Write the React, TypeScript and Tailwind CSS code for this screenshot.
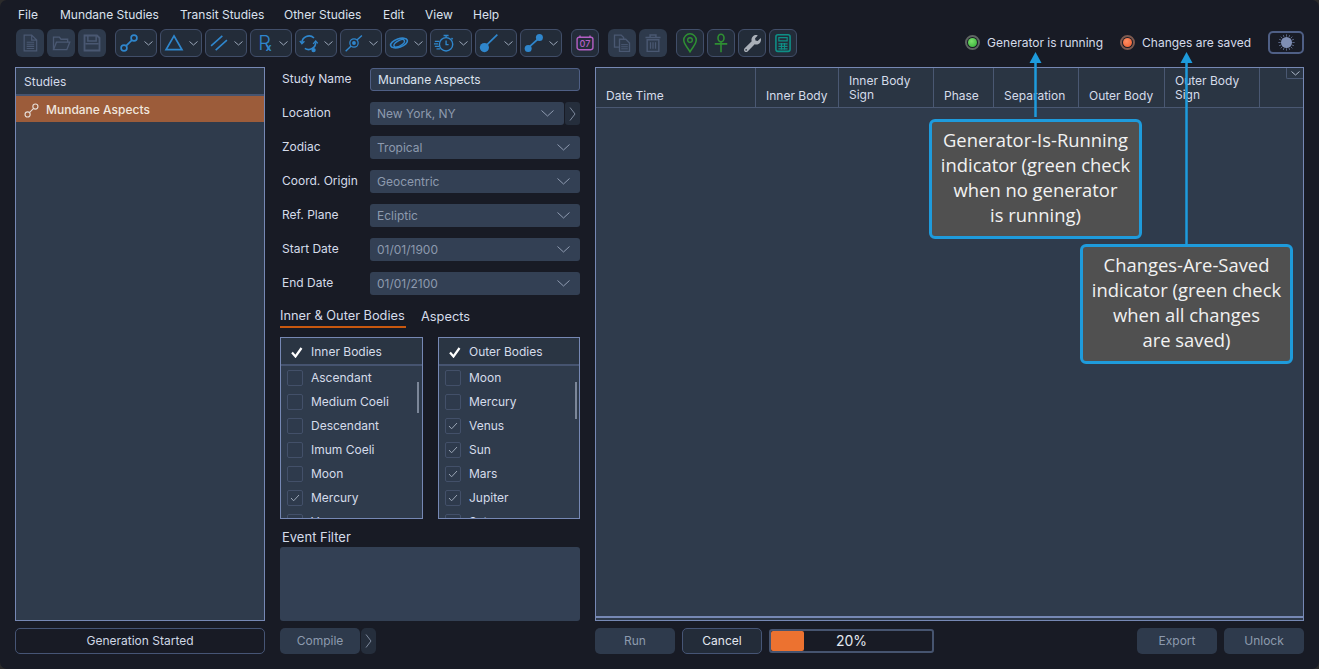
import React from "react";
import { FaWrench } from "react-icons/fa";

const Chevron = ({ w = 9, h = 4, c = "#9aa6b8" }: { w?: number; h?: number; c?: string }) => (
  <svg width={w} height={h + 1} viewBox={`0 0 ${w} ${h + 1}`} fill="none" className="shrink-0">
    <path d={`M0.5 0.5 L${w / 2} ${h} L${w - 0.5} 0.5`} stroke={c} strokeWidth="1" />
  </svg>
);

const RightChev = () => (
  <svg width="7" height="16" viewBox="0 0 7 16" fill="none">
    <path d="M1 1.5 L6 8 L1 14.5" stroke="#7d899c" strokeWidth="1" />
  </svg>
);

const S = ({ children, size = 20 }: { children: React.ReactNode; size?: number }) => (
  <svg width={size} height={size} viewBox="0 0 24 24" fill="none" className="shrink-0 overflow-visible">
    {children}
  </svg>
);

const BLUE = "#2f86cc";
const DIM = "#4a5872";

const IconDoc = () => (
  <S>
    <path d="M5 2.5 H14 L20 8.5 V21.5 H5 Z M14 2.5 V8.5 H20" stroke={DIM} strokeWidth="1.5" />
    <path d="M8 11 H17 M8 13.5 H17 M8 16 H17 M8 18.5 H17" stroke={DIM} strokeWidth="1.3" />
  </S>
);
const IconFolder = () => (
  <S>
    <path d="M3 20 V5 H10 L12 7.5 H20 V11" stroke={DIM} strokeWidth="1.6" />
    <path d="M3 20 L6.5 11 H22.5 L19 20 Z" stroke={DIM} strokeWidth="1.6" />
  </S>
);
const IconSave = () => (
  <S>
    <path d="M3 3 H18 L21 6 V21 H3 Z" stroke={DIM} strokeWidth="2.2" />
    <path d="M7 3 V9.5 H17 V3 M4 13 H20" stroke={DIM} strokeWidth="1.8" />
  </S>
);
const IconConj = ({ c = BLUE, sw = 2 }: { c?: string; sw?: number }) => (
  <S>
    <circle cx="6" cy="18" r="3.5" stroke={c} strokeWidth={sw} />
    <circle cx="18" cy="6" r="3.5" stroke={c} strokeWidth={sw} />
    <path d="M8.5 15.5 L15.5 8.5" stroke={c} strokeWidth={sw} />
  </S>
);
const IconTri = () => (
  <S>
    <path d="M12 3.5 L21.5 20 H2.5 Z" stroke={BLUE} strokeWidth="2.1" />
  </S>
);
const IconPar = () => (
  <S>
    <path d="M2.5 15.5 L16 3.5 M8 20.5 L21.5 8.5" stroke={BLUE} strokeWidth="1.9" />
  </S>
);
const IconRx = () => (
  <S>
    <text x="5" y="20" fontSize="24" fontFamily="Inter, sans-serif" fontWeight="300" fill={BLUE}>
      R
      <tspan dx="-6" dy="2" fontSize="12" fontWeight="700">x</tspan>
    </text>
  </S>
);
const IconCycle = () => (
  <S>
    <path d="M3.5 12 A8.5 8.5 0 0 1 18 6" stroke={BLUE} strokeWidth="1.9" />
    <path d="M20 11 A8.5 8.5 0 0 1 7 18.5" stroke={BLUE} strokeWidth="1.9" />
    <path d="M1 9.5 L3.5 13 L6.5 10 M17 13 L20 9.5 L22.5 12.5" stroke={BLUE} strokeWidth="1.6" />
    <circle cx="17.5" cy="20.5" r="2.6" fill={BLUE} />
  </S>
);
const IconNode = () => (
  <S>
    <path d="M2 22 L8.5 15.5 M15.5 8.5 L21.5 3" stroke={BLUE} strokeWidth="1.7" />
    <circle cx="12" cy="12" r="5" stroke={BLUE} strokeWidth="1.5" />
    <circle cx="12" cy="12" r="2.3" fill={BLUE} />
  </S>
);
const IconOrbit = () => (
  <S>
    <ellipse cx="12" cy="12" rx="10.5" ry="5" transform="rotate(-18 12 12)" stroke={BLUE} strokeWidth="2" />
    <ellipse cx="12" cy="12.5" rx="7" ry="3.2" transform="rotate(-30 12 12)" stroke={BLUE} strokeWidth="1.7" />
  </S>
);
const IconTimer = () => (
  <S>
    <circle cx="14.5" cy="13.5" r="8" stroke={BLUE} strokeWidth="1.7" />
    <path d="M11.5 3 H17.5 M14.5 3 V5.5 M14.5 9 V14 H17.5 M21 6 L22.5 7.5" stroke={BLUE} strokeWidth="1.6" />
    <path d="M1 10 H6.5 M0 13 H5 M1 16 H6 M3 19 H7.5" stroke={BLUE} strokeWidth="1.6" />
  </S>
);
const IconBall = () => (
  <S>
    <circle cx="6.5" cy="17.5" r="5.5" fill={BLUE} />
    <path d="M9 14.5 L22 2" stroke={BLUE} strokeWidth="2" />
  </S>
);
const IconDumb = () => (
  <S>
    <circle cx="5" cy="18.5" r="4.2" fill={BLUE} />
    <circle cx="18.5" cy="5.5" r="4.2" fill={BLUE} />
    <path d="M6 17 L17 7" stroke={BLUE} strokeWidth="2.1" />
  </S>
);
const IconCal = () => (
  <S>
    <rect x="2.5" y="5" width="19" height="15" rx="2.5" stroke="#b45fc4" strokeWidth="1.7" />
    <path d="M6 3 V6 M18 3 V6" stroke="#b45fc4" strokeWidth="1.7" />
    <text x="12" y="17" textAnchor="middle" fontSize="11" fontFamily="Inter, sans-serif" fontWeight="500" fill="#b45fc4">07</text>
  </S>
);
const IconCopy = () => (
  <S>
    <path d="M3 2.5 H11 L14 5.5 V17 H3 Z" stroke={DIM} strokeWidth="1.6" />
    <path d="M9 7.5 H16.5 L21 12 V22 H9 Z" fill="#2e3a4c" stroke={DIM} strokeWidth="1.6" />
    <path d="M11 14 H19 M11 16.5 H19 M11 19 H19" stroke={DIM} strokeWidth="1.2" />
  </S>
);
const IconTrash = () => (
  <S>
    <path d="M3 5.5 H21 M8.5 5.5 V2.5 H15.5 V5.5" stroke={DIM} strokeWidth="1.8" />
    <path d="M5 8 H19 V22 H5 Z" stroke={DIM} strokeWidth="1.7" />
    <path d="M9 11 V19 M12 11 V19 M15 11 V19" stroke={DIM} strokeWidth="1.5" />
  </S>
);
const IconPin = () => (
  <S>
    <path d="M12 22.5 C8 16 4.5 13 4.5 8.5 A7.5 7.5 0 0 1 19.5 8.5 C19.5 13 16 16 12 22.5 Z" stroke="#2f8f33" strokeWidth="1.8" />
    <circle cx="12" cy="8.5" r="2.8" stroke="#2f8f33" strokeWidth="1.6" />
  </S>
);
const IconAnkh = () => (
  <S>
    <ellipse cx="12" cy="6" rx="3.6" ry="4.6" stroke="#2f8f33" strokeWidth="1.9" />
    <path d="M12 11 V23 M4.5 13 H19.5" stroke="#2f8f33" strokeWidth="1.9" />
  </S>
);
const IconCalc = () => (
  <S>
    <rect x="3.5" y="2" width="17" height="20" rx="2.5" stroke="#0e8f86" strokeWidth="1.9" />
    <path d="M7 5.5 H17 V9.5 H7 Z" stroke="#0e8f86" strokeWidth="1.4" />
    <path d="M6.5 13 H17.5 M6.5 16 H17.5 M6.5 19 H17.5 M10.2 12 V20 M13.8 12 V20" stroke="#0e8f86" strokeWidth="1.3" />
  </S>
);
const IconSun = () => (
  <svg width="17" height="17" viewBox="0 0 16 16" fill="none">
    <circle cx="8" cy="8" r="5.2" fill="#7f8eb4" />
    <g stroke="#6f7ea4" strokeWidth="0.7">
      <path d="M8 0.3 V2.5 M8 13.5 V15.7 M0.3 8 H2.5 M13.5 8 H15.7 M2.5 2.5 L4 4 M12 12 L13.5 13.5 M13.5 2.5 L12 4 M4 12 L2.5 13.5" />
      <path d="M5 1 L5.6 2.8 M11 1 L10.4 2.8 M5 15 L5.6 13.2 M11 15 L10.4 13.2 M1 5 L2.8 5.6 M1 11 L2.8 10.4 M15 5 L13.2 5.6 M15 11 L13.2 10.4" />
    </g>
  </svg>
);

const Flat = ({ children }: { children: React.ReactNode }) => (
  <div className="w-7 h-7 rounded-[6px] bg-[#2e3a4c] flex items-center justify-center">{children}</div>
);
const Outlined = ({ children }: { children: React.ReactNode }) => (
  <div className="w-7 h-7 rounded-[6px] bg-[#232c39] border border-[#414e69] flex items-center justify-center">{children}</div>
);
const Drop = ({ children }: { children: React.ReactNode }) => (
  <div className="w-[42px] h-7 rounded-[6px] bg-[#232c39] border border-[#414e69] flex items-center pl-[3px] pr-[3px] justify-between">
    {children}
    <Chevron />
  </div>
);

const Field = ({ label, value, extra }: { label: string; value: string; extra?: boolean }) => (
  <div className="flex items-center h-[23px] mb-[11px]">
    <span className="w-[90px] pl-[2px] shrink-0 text-[#d5dcea] -mt-[1px]">{label}</span>
    <div className="flex-1 flex gap-px h-full">
      <div className="flex-1 h-full bg-[#334054] rounded-[3px] flex items-center justify-between pl-[7px] pr-[10px] text-[#8d9aae]">
        <span>{value}</span>
        <Chevron w={13} h={6} c="#8f9bb0" />
      </div>
      {extra && (
        <div className="w-[15px] h-full rounded-[3px] bg-[#252e3c] flex items-center justify-center">
          <RightChev />
        </div>
      )}
    </div>
  </div>
);

const Check = ({ on }: { on?: boolean }) => (
  <div className="w-4 h-4 shrink-0 rounded-[2px] bg-[#2e3a4c] border border-[#435069] flex items-center justify-center">
    {on && (
      <svg width="10" height="8" viewBox="0 0 10 8" fill="none">
        <path d="M1 4 L3.6 6.8 L9 1" stroke="#9aa5b5" strokeWidth="1" />
      </svg>
    )}
  </div>
);

const BodyList = ({
  title,
  items,
  width,
  thumbHeight,
  thumbRight,
}: {
  title: string;
  items: [string, boolean][];
  width: string;
  thumbHeight: string;
  thumbRight: string;
}) => (
  <div className={`${width} h-[182px] border border-[#7688b4] bg-[#2f3b4c] relative overflow-hidden`}>
    <div className="h-[24px] pt-[2px] bg-[#2a3543] border-b-2 border-[#465470] flex items-center box-content">
      <svg width="12" height="11" viewBox="0 0 12 11" fill="none" className="ml-[10px] mr-[8px]">
        <path d="M1 5.5 L4.5 9.5 L10.5 1" stroke="#ffffff" strokeWidth="2.2" />
      </svg>
      <span className="text-[#d5dcea]">{title}</span>
    </div>
    <div>
      {items.map(([name, on]) => (
        <div key={name} className="h-6 flex items-center pl-[6px] gap-[8px] text-[#d5dcea]">
          <Check on={on} />
          <span>{name}</span>
        </div>
      ))}
    </div>
    <div className={`absolute top-[44px] ${thumbRight} w-[2px] ${thumbHeight} bg-[#7c8799]`} />
  </div>
);

const Btn = ({ children, width = "w-20" }: { children: React.ReactNode; width?: string }) => (
  <div className={`${width} h-[26px] rounded-[5px] bg-[#2e3a4c] text-[#8d9aae] flex items-center justify-center`}>{children}</div>
);

const Th = ({ w, children, last, two }: { w: string; children?: React.ReactNode; last?: boolean; two?: boolean }) => (
  <div className={`${w} h-full shrink-0 pl-[10px] ${two ? "pb-[5px]" : "pb-[4px]"} flex items-end leading-[14px] text-[#d5dcea] ${last ? "" : "border-r border-[#4a5872]"}`}>
    <span>{children}</span>
  </div>
);

const Dot = ({ core, edge }: { core: string; edge: string }) => (
  <div className={`w-[15px] h-[15px] rounded-full border-2 ${edge} flex items-center justify-center`}>
    <div className={`w-[9px] h-[9px] rounded-full ${core}`} />
  </div>
);

const Callout = ({ lines, pos }: { lines: string[]; pos: string }) => (
  <div className={`absolute ${pos} w-[213px] h-[120px] pb-[4px] rounded-[6px] border-[3px] border-[#1e9bdc] bg-[#505050] text-[#f2f2f2] text-[18.4px] leading-[25px] flex flex-col items-center justify-center font-['Open_Sans',sans-serif]`}>
    {lines.map((l) => (
      <div key={l} className="whitespace-nowrap">{l}</div>
    ))}
  </div>
);

export default function App() {
  return (
    <div className="w-[1319px] h-[669px] bg-[#2b2b2b]">
      <div className="w-full h-full relative overflow-hidden rounded-[7px] bg-[#181b25] font-['Inter',sans-serif] text-[12px] leading-[16px] px-[15px] flex flex-col">
        {/* Menu */}
        <div className="h-[29px] flex items-center text-[#dbe2ee] pl-[3px] shrink-0">
          <span className="w-[42px]">File</span>
          <span className="w-[120px]">Mundane Studies</span>
          <span className="w-[104px]">Transit Studies</span>
          <span className="w-[99px]">Other Studies</span>
          <span className="w-[42px]">Edit</span>
          <span className="w-[48px]">View</span>
          <span>Help</span>
        </div>

        {/* Toolbar */}
        <div className="h-7 flex items-center shrink-0 pl-px">
          <div className="flex gap-[3px]">
            <Flat><IconDoc /></Flat>
            <Flat><IconFolder /></Flat>
            <Flat><IconSave /></Flat>
          </div>
          <div className="flex gap-[3px] ml-[9px]">
            <Drop><IconConj /></Drop>
            <Drop><IconTri /></Drop>
            <Drop><IconPar /></Drop>
            <Drop><IconRx /></Drop>
            <Drop><IconCycle /></Drop>
            <Drop><IconNode /></Drop>
            <Drop><IconOrbit /></Drop>
            <Drop><IconTimer /></Drop>
            <Drop><IconBall /></Drop>
            <Drop><IconDumb /></Drop>
          </div>
          <div className="ml-[9px]"><Outlined><IconCal /></Outlined></div>
          <div className="flex gap-[3px] ml-[9px]">
            <Flat><IconCopy /></Flat>
            <Flat><IconTrash /></Flat>
          </div>
          <div className="flex gap-[3px] ml-[9px]">
            <Outlined><IconPin /></Outlined>
            <Outlined><IconAnkh /></Outlined>
            <Outlined><FaWrench size={17} color="#aab0b8" /></Outlined>
            <Outlined><IconCalc /></Outlined>
          </div>
          <div className="ml-auto flex items-center text-[#d5dcea] -mt-[1px]">
            <Dot core="bg-[radial-gradient(circle_at_40%_35%,#7be06b,#2fae35)]" edge="border-[#5f6663]" />
            <span className="ml-[7px]">Generator is running</span>
            <div className="ml-[17px]"><Dot core="bg-[radial-gradient(circle_at_40%_35%,#ff8e63,#ec5a2c)]" edge="border-[#7d5a50]" /></div>
            <span className="ml-[7px]">Changes are saved</span>
            <div className="ml-[17px] w-9 h-[23px] rounded-[5px] border-2 border-[#4f5f85] flex items-center justify-center">
              <IconSun />
            </div>
          </div>
        </div>

        {/* Main */}
        <div className="flex gap-[15px] mt-[10px] flex-1 min-h-0 pb-[15px]">
          {/* Studies */}
          <div className="w-[250px] flex flex-col shrink-0">
            <div className="h-[554px] border border-[#7688b4] bg-[#2f3b4c]">
              <div className="h-[26px] pt-[2px] bg-[#2a3543] flex items-center pl-[8px] text-[#d5dcea]">Studies</div>
              <div className="h-[2px] bg-[#465470]" />
              <div className="h-[26px] pt-[2px] bg-[#9c5c3a] flex items-center pl-[7px] gap-[6px] text-[#f0e6de] font-medium">
                <svg width="17" height="17" viewBox="0 0 24 24" fill="none">
                  <circle cx="6.5" cy="17.5" r="3.6" stroke="#e6dcd6" strokeWidth="1.6" />
                  <circle cx="17.5" cy="6.5" r="3.6" stroke="#e6dcd6" strokeWidth="1.6" />
                  <path d="M9 15 L15 9" stroke="#e6dcd6" strokeWidth="1.6" />
                </svg>
                <span>Mundane Aspects</span>
              </div>
            </div>
            <div className="mt-[7px] h-[26px] rounded-[5px] border border-[#465575] text-[#cfd7e4] flex items-center justify-center">Generation Started</div>
          </div>

          {/* Form */}
          <div className="w-[300px] flex flex-col shrink-0">
            <div className="pt-px">
              <div className="flex items-center h-[23px] mb-[11px]">
                <span className="w-[90px] pl-[2px] shrink-0 text-[#d5dcea] -mt-[1px]">Study Name</span>
                <div className="flex-1 h-full bg-[#2e3a4c] border border-[#4f5f85] rounded-[3px] flex items-center pl-[7px] text-[#dbe2ee]">Mundane Aspects</div>
              </div>
              <Field label="Location" value="New York, NY" extra />
              <Field label="Zodiac" value="Tropical" />
              <Field label="Coord. Origin" value="Geocentric" />
              <Field label="Ref. Plane" value="Ecliptic" />
              <Field label="Start Date" value="01/01/1900" />
              <Field label="End Date" value="01/01/2100" />
            </div>
            <div className="flex gap-[15px] h-[23px] -mt-px text-[#d5dcea] text-[12.8px]">
              <div className="h-[23px] border-b-2 border-[#c9580f] flex items-center w-[126px] whitespace-nowrap">Inner &amp; Outer Bodies</div>
              <div className="h-[23px] flex items-center">Aspects</div>
            </div>
            <div className="flex gap-[15px] mt-[9px]">
              <BodyList
                title="Inner Bodies"
                width="w-[143px]"
                thumbHeight="h-[31px]"
                thumbRight="right-[3px]"
                items={[["Ascendant", false], ["Medium Coeli", false], ["Descendant", false], ["Imum Coeli", false], ["Moon", false], ["Mercury", true], ["Venus", false]]}
              />
              <BodyList
                title="Outer Bodies"
                width="w-[142px]"
                thumbHeight="h-[37px]"
                thumbRight="right-[2px]"
                items={[["Moon", false], ["Mercury", false], ["Venus", true], ["Sun", true], ["Mars", true], ["Jupiter", true], ["Saturn", true]]}
              />
            </div>
            <div className="h-[28px] flex items-end pb-[2px] pl-[2px] text-[#d5dcea] text-[13px]">Event Filter</div>
            <div className="h-[74px] bg-[#334054] rounded-[3px]" />
            <div className="mt-[7px] flex gap-px">
              <Btn>Compile</Btn>
              <div className="w-[15px] h-[26px] rounded-[5px] bg-[#252e3c] flex items-center justify-center"><RightChev /></div>
            </div>
          </div>

          {/* Results */}
          <div className="w-[709px] flex flex-col shrink-0">
            <div className="h-[554px] border border-[#7688b4] bg-[#2f3b4c] flex flex-col relative">
              <div className="h-[40px] bg-[#2a3543] border-b border-[#4a5872] flex shrink-0">
                <Th w="w-[160px]">Date Time</Th>
                <Th w="w-[83px]">Inner Body</Th>
                <Th w="w-[95px]" two>Inner Body<br />Sign</Th>
                <Th w="w-[60px]">Phase</Th>
                <Th w="w-[85px]">Separation</Th>
                <Th w="w-[86px]">Outer Body</Th>
                <Th w="w-[95px]" two>Outer Body<br />Sign</Th>
                <Th w="w-[43px]" last />
              </div>
              <div className="absolute top-0 right-0 w-[17px] h-[11px] bg-[#2a3543] border-l border-b border-[#4a5872] rounded-bl-[2px] flex items-center justify-center">
                <Chevron w={9} h={4} c="#aeb8c8" />
              </div>
              <div className="flex-1" />
              <div className="h-[2px] bg-[#7688b4] mb-[2px]" />
            </div>
            <div className="mt-[7px] flex items-center gap-[7px]">
              <Btn>Run</Btn>
              <div className="w-20 h-[26px] rounded-[5px] bg-[#232c39] border border-[#465575] text-[#e3e8f0] flex items-center justify-center">Cancel</div>
              <div className="w-[165px] h-6 rounded-[3px] border-2 border-[#46546f] relative flex items-center justify-center text-[#e3e8f0] text-[14px]">
                <div className="absolute left-0 top-0 bottom-0 w-[33px] bg-[#ec7230] rounded-[2px]" />
                <span className="relative">20%</span>
              </div>
              <div className="ml-auto"><Btn>Export</Btn></div>
              <Btn>Unlock</Btn>
            </div>
          </div>
        </div>

        {/* Annotations */}
        <svg width="1319" height="669" viewBox="0 0 1319 669" fill="none" className="absolute inset-0 pointer-events-none">
          <path d="M1035.5 60 V117" stroke="#1e9bdc" strokeWidth="2.5" />
          <path d="M1029.5 63 L1035.5 52 L1041.5 63 Z" fill="#1e9bdc" />
          <path d="M1186.5 60 V244" stroke="#1e9bdc" strokeWidth="2.5" />
          <path d="M1180.5 63 L1186.5 52 L1192.5 63 Z" fill="#1e9bdc" />
        </svg>
        <Callout pos="left-[929px] top-[119px]" lines={["Generator-Is-Running", "indicator (green check", "when no generator", "is running)"]} />
        <Callout pos="left-[1080px] top-[244px]" lines={["Changes-Are-Saved", "indicator (green check", "when all changes", "are saved)"]} />
      </div>
    </div>
  );
}
